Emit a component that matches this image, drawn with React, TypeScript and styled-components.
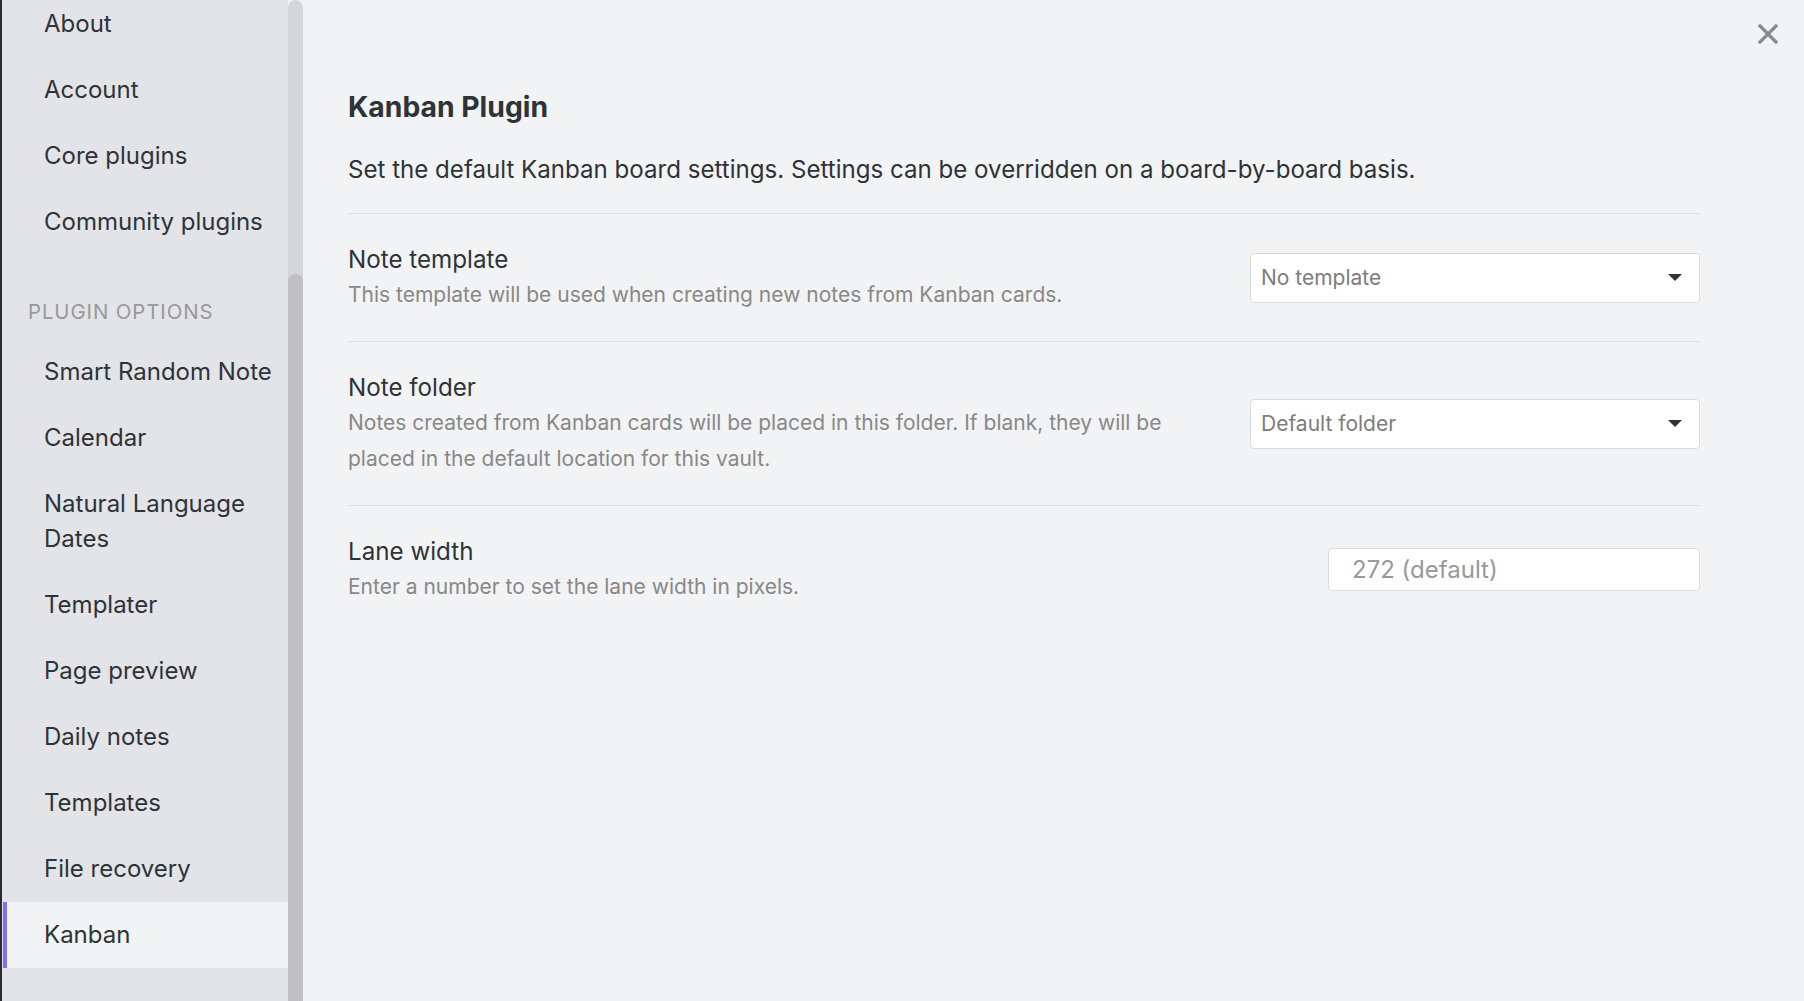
import React from 'react'
import styled, { createGlobalStyle } from 'styled-components'

const GlobalStyle = createGlobalStyle`
    html, body {
        margin: 0;
        padding: 0;
        background: #f2f3f5;
        font-family: Inter, "Noto Sans", sans-serif;
        color: #2e3338;
        -webkit-font-smoothing: antialiased;
    }
    * {
        box-sizing: border-box;
    }
`

interface NavEntry {
    label: string
    active?: boolean
}

const coreTabs: NavEntry[] = [
    { label: 'About' },
    { label: 'Account' },
    { label: 'Core plugins' },
    { label: 'Community plugins' },
]

const pluginTabs: NavEntry[] = [
    { label: 'Smart Random Note' },
    { label: 'Calendar' },
    { label: 'Natural Language Dates' },
    { label: 'Templater' },
    { label: 'Page preview' },
    { label: 'Daily notes' },
    { label: 'Templates' },
    { label: 'File recovery' },
    { label: 'Kanban', active: true },
]

const CloseIcon = () => (
    <svg width="22" height="22" viewBox="0 0 22 22">
        <path d="M3 3 L19 19 M19 3 L3 19" stroke="#8a8a8a" strokeWidth="3.2" strokeLinecap="square" />
    </svg>
)

const App: React.FC = () => {
    return (
        <>
            <GlobalStyle />
            <Window>
                <EdgeStrip />
                <Sidebar>
                    <NavList>
                        {coreTabs.map(t => (
                            <NavItem key={t.label}>{t.label}</NavItem>
                        ))}
                        <GroupTitle>Plugin options</GroupTitle>
                        {pluginTabs.map(t => (
                            <NavItem key={t.label} $active={t.active}>{t.label}</NavItem>
                        ))}
                    </NavList>
                </Sidebar>
                <ScrollTrack>
                    <ScrollThumb />
                </ScrollTrack>
                <Main>
                    <CloseButton aria-label="Close">
                        <CloseIcon />
                    </CloseButton>
                    <Title>Kanban Plugin</Title>
                    <Intro>Set the default Kanban board settings. Settings can be overridden on a board-by-board basis.</Intro>

                    <SettingItem>
                        <SettingInfo>
                            <SettingName>Note template</SettingName>
                            <SettingDesc>This template will be used when creating new notes from Kanban cards.</SettingDesc>
                        </SettingInfo>
                        <Dropdown>
                            <DropdownText>No template</DropdownText>
                            <Caret />
                        </Dropdown>
                    </SettingItem>

                    <SettingItem>
                        <SettingInfo>
                            <SettingName>Note folder</SettingName>
                            <SettingDesc>Notes created from Kanban cards will be placed in this folder. If blank, they will be placed in the default location for this vault.</SettingDesc>
                        </SettingInfo>
                        <Dropdown>
                            <DropdownText>Default folder</DropdownText>
                            <Caret />
                        </Dropdown>
                    </SettingItem>

                    <SettingItem>
                        <SettingInfo>
                            <SettingName>Lane width</SettingName>
                            <SettingDesc>Enter a number to set the lane width in pixels.</SettingDesc>
                        </SettingInfo>
                        <NumberInput type="text" placeholder="272 (default)" />
                    </SettingItem>
                </Main>
            </Window>
        </>
    )
}

export default App

const Window = styled.div`
    display: flex;
    width: 100%;
    height: 100vh;
    overflow: hidden;
`

const EdgeStrip = styled.div`
    width: 2px;
    flex-shrink: 0;
    background-color: #2b2b2b;
`

const Sidebar = styled.nav`
    width: 286px;
    flex-shrink: 0;
    background-color: #e3e4e8;
    overflow: hidden;
`

const NavList = styled.div`
    display: flex;
    flex-direction: column;
    margin-top: -9px;
`

const NavItem = styled.div<{ $active?: boolean }>`
    font-size: 24px;
    line-height: 35px;
    padding: 15px 6px 16px 42px;
    color: #2e3338;
    background-color: ${props => props.$active ? '#f2f3f5' : 'transparent'};
    ${props => props.$active && `
        margin-left: 1px;
        padding-left: 37px;
        border-left: 4px solid #7f6df2;
    `}
`

const GroupTitle = styled.div`
    font-size: 20.4px;
    line-height: 24px;
    padding: 45px 0 15px 26px;
    text-transform: uppercase;
    letter-spacing: 0.9px;
    color: #999999;
`

const ScrollTrack = styled.div`
    width: 15px;
    flex-shrink: 0;
    display: flex;
    flex-direction: column;
    background-color: #d5d6d9;
    border-radius: 8px 8px 0 0;
`

const ScrollThumb = styled.div`
    margin-top: 274px;
    flex: 1;
    background-color: #c0c0c2;
    border-radius: 8px 8px 0 0;
`

const Main = styled.main`
    position: relative;
    flex: 1;
    background-color: #f2f3f5;
    padding: 89px 104px 0 45px;
`

const CloseButton = styled.div`
    position: absolute;
    top: 23px;
    right: 25px;
    width: 22px;
    height: 22px;
    display: flex;
`

const Title = styled.h2`
    margin: 0;
    font-size: 28.3px;
    line-height: 36px;
    font-weight: 700;
    color: #2e3338;
`

const Intro = styled.p`
    margin: 27px 0 25px;
    font-size: 24.1px;
    line-height: 36px;
    color: #2e3338;
`

const SettingItem = styled.div`
    display: flex;
    align-items: center;
    border-top: 1px solid #dddee1;
    padding: 28px 0;
`

const SettingInfo = styled.div`
    flex: 1 1 auto;
    margin-right: 45px;
`

const SettingName = styled.div`
    font-size: 24.2px;
    line-height: 35px;
    color: #2e3338;
`

const SettingDesc = styled.div`
    font-size: 21px;
    line-height: 36px;
    color: #888888;
`

const Dropdown = styled.div`
    flex: 0 0 450px;
    height: 50px;
    display: flex;
    align-items: center;
    justify-content: space-between;
    padding: 0 17px 0 10px;
    background-color: #ffffff;
    border: 1px solid #dcdcdc;
    border-radius: 4px;
`

const DropdownText = styled.span`
    font-size: 21px;
    color: #7d7d7d;
`

const Caret = styled.span`
    width: 0;
    height: 0;
    border-left: 7.5px solid transparent;
    border-right: 7.5px solid transparent;
    border-top: 7px solid #333333;
`

const NumberInput = styled.input`
    flex: 0 0 372px;
    width: 372px;
    min-width: 0;
    height: 43px;
    padding: 0 23px;
    font-family: Inter, "Noto Sans", sans-serif;
    font-size: 24px;
    color: #2e3338;
    background-color: #ffffff;
    border: 1px solid #dcdcdc;
    border-radius: 4px;
    outline: none;
    &::placeholder {
        color: #999999;
    }
`
